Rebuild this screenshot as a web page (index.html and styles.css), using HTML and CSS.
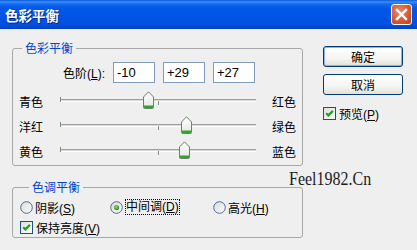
FILE: index.html
```html
<!DOCTYPE html>
<html lang="zh-CN">
<head>
<meta charset="utf-8">
<title>色彩平衡</title>
<link rel="stylesheet" href="styles.css">
</head>
<body>
<div class="window">
  <div class="titlebar">
    <span class="title">色彩平衡</span>
    <span class="close">
      <svg width="19" height="19" viewBox="0 0 19 19"><path d="M5 5 L14 14 M14 5 L5 14" stroke="#fff" stroke-width="2.4" stroke-linecap="square"/></svg>
    </span>
  </div>
  <div class="client">
    <div class="left">
      <fieldset class="group group-balance">
        <legend>色彩平衡</legend>
        <div class="levels">
          <span class="levels-label">色阶(<u>L</u>):</span>
          <span class="field">-10</span>
          <span class="field">+29</span>
          <span class="field">+27</span>
        </div>
        <div class="slider-row">
          <span class="side-left">青色</span>
          <div class="slider">
            <div class="track"></div>
            <span class="tick tick-start"></span>
            <span class="tick tick-mid"></span>
            <svg class="thumb" style="left: calc(45% - 5.5px)" width="11" height="18" viewBox="0 0 11 18">
              <defs><linearGradient id="tg1" x1="0" y1="0" x2="0" y2="1"><stop offset="0" stop-color="#ffffff"/><stop offset="1" stop-color="#e3e8e0"/></linearGradient></defs>
              <path d="M0.5 6 L5.5 0.8 L10.5 6 V16.5 Q10.5 17.5 9.5 17.5 H1.5 Q0.5 17.5 0.5 16.5 Z" fill="url(#tg1)" stroke="#6f806f"/>
              <rect x="1" y="14.5" width="9" height="2.5" fill="#2ea62e"/>
            </svg>
          </div>
          <span class="side-right">红色</span>
        </div>
        <div class="slider-row">
          <span class="side-left">洋红</span>
          <div class="slider">
            <div class="track"></div>
            <span class="tick tick-start"></span>
            <span class="tick tick-mid"></span>
            <svg class="thumb" style="left: calc(64.5% - 5.5px)" width="11" height="18" viewBox="0 0 11 18">
              <defs><linearGradient id="tg2" x1="0" y1="0" x2="0" y2="1"><stop offset="0" stop-color="#ffffff"/><stop offset="1" stop-color="#e3e8e0"/></linearGradient></defs>
              <path d="M0.5 6 L5.5 0.8 L10.5 6 V16.5 Q10.5 17.5 9.5 17.5 H1.5 Q0.5 17.5 0.5 16.5 Z" fill="url(#tg2)" stroke="#6f806f"/>
              <rect x="1" y="14.5" width="9" height="2.5" fill="#2ea62e"/>
            </svg>
          </div>
          <span class="side-right">绿色</span>
        </div>
        <div class="slider-row">
          <span class="side-left">黄色</span>
          <div class="slider">
            <div class="track"></div>
            <span class="tick tick-start"></span>
            <span class="tick tick-mid"></span>
            <svg class="thumb" style="left: calc(63.5% - 5.5px)" width="11" height="18" viewBox="0 0 11 18">
              <defs><linearGradient id="tg3" x1="0" y1="0" x2="0" y2="1"><stop offset="0" stop-color="#ffffff"/><stop offset="1" stop-color="#e3e8e0"/></linearGradient></defs>
              <path d="M0.5 6 L5.5 0.8 L10.5 6 V16.5 Q10.5 17.5 9.5 17.5 H1.5 Q0.5 17.5 0.5 16.5 Z" fill="url(#tg3)" stroke="#6f806f"/>
              <rect x="1" y="14.5" width="9" height="2.5" fill="#2ea62e"/>
            </svg>
          </div>
          <span class="side-right">蓝色</span>
        </div>
      </fieldset>

      <fieldset class="group group-tone">
        <legend>色调平衡</legend>
        <div class="radios">
          <span class="radio-item radio-shadow">
            <svg class="radio" width="13" height="13" viewBox="0 0 13 13">
              <defs><linearGradient id="rg1" x1="0" y1="0" x2="1" y2="1"><stop offset="0" stop-color="#d8d8d2"/><stop offset="1" stop-color="#ffffff"/></linearGradient></defs>
              <circle cx="6.5" cy="6.5" r="5.8" fill="url(#rg1)" stroke="#4a6a94" stroke-width="1"/>
            </svg>
            <span>阴影(<u>S</u>)</span>
          </span>
          <span class="radio-item radio-mid">
            <svg class="radio" width="13" height="13" viewBox="0 0 13 13">
              <defs><linearGradient id="rg2" x1="0" y1="0" x2="1" y2="1"><stop offset="0" stop-color="#d8d8d2"/><stop offset="1" stop-color="#ffffff"/></linearGradient>
              <radialGradient id="dg" cx="0.4" cy="0.4" r="0.6"><stop offset="0" stop-color="#8fd88f"/><stop offset="1" stop-color="#2a8f2a"/></radialGradient></defs>
              <circle cx="6.5" cy="6.5" r="5.8" fill="url(#rg2)" stroke="#4a6a94" stroke-width="1"/>
              <circle cx="6.5" cy="6.5" r="2.6" fill="url(#dg)"/>
            </svg>
            <span class="focus">中间调(<u>D</u>)</span>
          </span>
          <span class="radio-item">
            <svg class="radio" width="13" height="13" viewBox="0 0 13 13">
              <defs><linearGradient id="rg3" x1="0" y1="0" x2="1" y2="1"><stop offset="0" stop-color="#d8d8d2"/><stop offset="1" stop-color="#ffffff"/></linearGradient></defs>
              <circle cx="6.5" cy="6.5" r="5.8" fill="url(#rg3)" stroke="#4a6a94" stroke-width="1"/>
            </svg>
            <span>高光(<u>H</u>)</span>
          </span>
        </div>
        <div class="check-row">
          <svg class="checkbox" width="13" height="13" viewBox="0 0 13 13">
            <defs><linearGradient id="cg1" x1="0" y1="0" x2="1" y2="1"><stop offset="0" stop-color="#dcdcd7"/><stop offset="1" stop-color="#ffffff"/></linearGradient></defs>
            <rect x="0.5" y="0.5" width="12" height="12" fill="url(#cg1)" stroke="#1c5180"/>
            <path d="M3.2 6.2 L5.4 8.4 L9.9 3.9" fill="none" stroke="#21a121" stroke-width="2.2"/>
          </svg>
          <span>保持亮度(<u>V</u>)</span>
        </div>
      </fieldset>
    </div>

    <div class="right">
      <span class="btn btn-default">确定</span>
      <span class="btn btn-cancel">取消</span>
      <span class="preview">
        <svg class="checkbox" width="13" height="13" viewBox="0 0 13 13">
          <defs><linearGradient id="cg2" x1="0" y1="0" x2="1" y2="1"><stop offset="0" stop-color="#dcdcd7"/><stop offset="1" stop-color="#ffffff"/></linearGradient></defs>
          <rect x="0.5" y="0.5" width="12" height="12" fill="url(#cg2)" stroke="#1c5180"/>
          <path d="M3.2 6.2 L5.4 8.4 L9.9 3.9" fill="none" stroke="#21a121" stroke-width="2.2"/>
        </svg>
        <span>预览(<u>P</u>)</span>
      </span>
    </div>

    <div class="watermark">Feel1982.Cn</div>
  </div>
</div>
</body>
</html>
```

FILE: styles.css
```css
* { box-sizing: border-box; }

html, body {
  margin: 0;
  padding: 0;
}

body {
  width: 417px;
  height: 250px;
  overflow: hidden;
  background: #efefef;
  font-family: "Liberation Sans", "Noto Sans CJK SC", sans-serif;
  font-size: 12px;
  color: #000;
}

.window {
  height: 250px;
  display: flex;
  flex-direction: column;
}

.titlebar {
  height: 29px;
  flex: none;
  display: flex;
  align-items: center;
  justify-content: space-between;
  padding: 0 5px 0 5px;
  background: linear-gradient(180deg, #0a58dc 0px, #3c8ef5 2px, #1468f0 4px, #0058e8 8px, #0054e3 18px, #0050dc 25px, #003fc0 29px);
}

.title {
  color: #fff;
  font-family: "Noto Sans CJK SC", sans-serif;
  font-weight: bold;
  font-size: 13.5px;
  line-height: 16px;
  text-shadow: 1px 1px 0 #0a2a8a;
}

.close {
  width: 21px;
  height: 21px;
  display: flex;
  align-items: center;
  justify-content: center;
  border: 1px solid #fff;
  border-radius: 3px;
  background: radial-gradient(circle at 40% 35%, #ee8a6a 0%, #d85a35 55%, #c2401c 100%);
}

.client {
  position: relative;
  flex: 1;
  display: flex;
  gap: 20px;
  padding: 12px 14px 0 12px;
}

.left {
  width: 291px;
  display: flex;
  flex-direction: column;
  gap: 14px;
}

.group {
  margin: 0;
  padding: 0;
  min-width: 0;
  border: 1px solid #a8a8a8;
  border-radius: 3px;
}

.group legend {
  margin-left: 9px;
  padding: 0 3px;
  color: #0046d5;
  font-family: "Noto Sans CJK SC", sans-serif;
  line-height: 14px;
}

.group-balance {
  padding-bottom: 1px;
}

.levels {
  display: flex;
  align-items: center;
  gap: 8px;
  margin-top: 7px;
  margin-bottom: 6px;
}

.levels-label {
  width: 92px;
  text-align: right;
}

.field {
  width: 42px;
  height: 21px;
  border: 1px solid #7f9db9;
  background: #fff;
  padding: 0 3px;
  line-height: 19px;
  font-size: 13px;
}

.slider-row {
  display: flex;
  align-items: center;
  height: 25px;
}

.side-left {
  width: 47px;
  padding-left: 6px;
}

.side-right {
  margin-left: 16px;
}

.slider {
  position: relative;
  width: 196px;
  height: 25px;
}

.track {
  margin-top: 10px;
  height: 3px;
  border-top: 1px solid #9f9f9f;
  background: #d9d9d9;
  border-bottom: 1px solid #ffffff;
}

.tick {
  position: absolute;
  width: 1px;
  background: #8c8c8c;
}

.tick-start {
  left: 0;
  top: 8px;
  height: 5px;
}

.tick-mid {
  left: 98px;
  top: 12px;
  height: 4px;
}

.thumb {
  position: absolute;
  top: 2px;
}

.group-tone {
  padding: 4px 0 1px 7px;
}

.radios {
  display: flex;
  align-items: center;
  height: 18px;
}

.radio-item {
  display: flex;
  align-items: center;
  gap: 2px;
}

.radio-shadow {
  width: 90px;
}

.radio-mid {
  width: 103px;
}

.focus {
  outline: 1px dotted #000;
  outline-offset: -1px;
  padding: 0 1px;
  line-height: 16px;
}

.check-row {
  display: flex;
  align-items: center;
  gap: 3px;
  height: 18px;
  margin-top: 2px;
}

.right {
  width: 80px;
  display: flex;
  flex-direction: column;
  padding-top: 5px;
}

.btn {
  height: 21px;
  display: flex;
  align-items: center;
  justify-content: center;
  border: 1px solid #003c74;
  border-radius: 3px;
  background: linear-gradient(180deg, #ffffff 0%, #f5f5f2 60%, #e2e0d8 100%);
  font-family: "Noto Sans CJK SC", sans-serif;
}

.btn-default {
  box-shadow: inset 0 0 0 1px #8fb0ea;
}

.btn-cancel {
  margin-top: 7px;
}

.preview {
  margin-top: 12px;
  display: flex;
  align-items: center;
  gap: 3px;
  height: 13px;
}

.watermark {
  position: absolute;
  left: 289px;
  top: 143px;
  font-family: "Liberation Serif", serif;
  font-size: 16px;
  line-height: 16px;
  color: #1c1c1c;
  transform: scale(1, 1.19);
  transform-origin: 0 13px;
}
```
